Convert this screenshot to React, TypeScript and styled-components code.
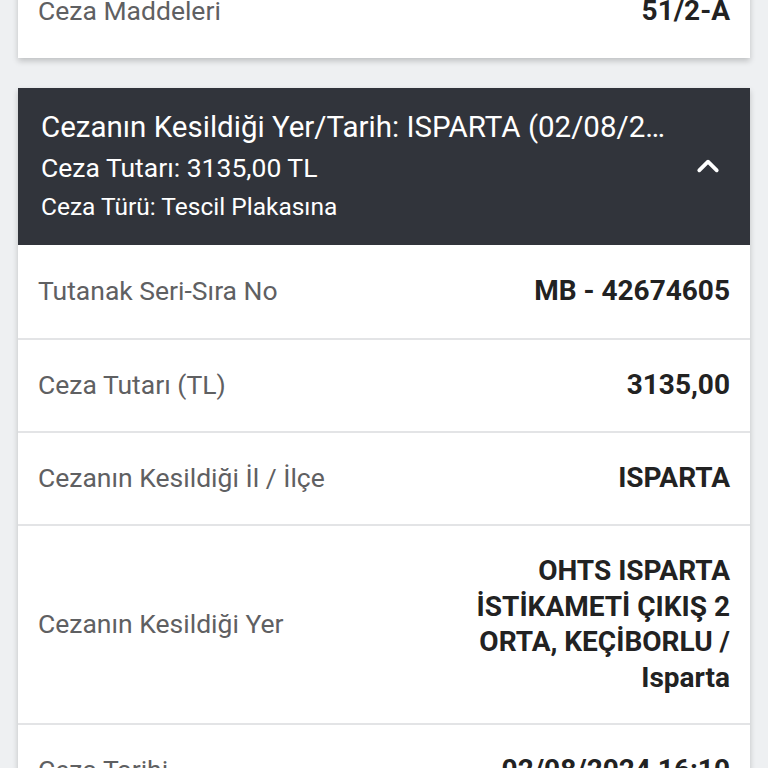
import React from "react";
import styled, { createGlobalStyle } from "styled-components";

const GlobalStyle = createGlobalStyle`
  html, body {
    margin: 0;
    padding: 0;
    background: #eef0f2;
    font-family: Roboto, "Liberation Sans", sans-serif;
  }
`;

const rows = [
  { label: "Tutanak Seri-Sıra No", value: "MB - 42674605" },
  { label: "Ceza Tutarı (TL)", value: "3135,00" },
  { label: "Cezanın Kesildiği İl / İlçe", value: "ISPARTA" },
  {
    label: "Cezanın Kesildiği Yer",
    value: "OHTS ISPARTA İSTİKAMETİ ÇIKIŞ 2 ORTA, KEÇİBORLU / Isparta",
  },
  { label: "Ceza Tarihi", value: "02/08/2024 16:10" },
];

export default function App() {
  return (
    <>
      <GlobalStyle />
      <Page>
        <Card>
          <Row>
            <Label>Ceza Maddeleri</Label>
            <Value>51/2-A</Value>
          </Row>
        </Card>
        <Card>
          <Header>
            <HeaderText>
              <Title>Cezanın Kesildiği Yer/Tarih: ISPARTA (02/08/2024 16:10)</Title>
              <SubTitle>Ceza Tutarı: 3135,00 TL</SubTitle>
              <Small>Ceza Türü: Tescil Plakasına</Small>
            </HeaderText>
            <Chevron viewBox="0 0 24 24">
              <path d="M5 15.5l7-7 7 7" fill="none" stroke="#fff" strokeWidth="3" strokeLinecap="round" strokeLinejoin="round" />
            </Chevron>
          </Header>
          <Body>
            {rows.map((r) => (
              <Row key={r.label}>
                <Label>{r.label}</Label>
                <Value>{r.value}</Value>
              </Row>
            ))}
          </Body>
        </Card>
      </Page>
    </>
  );
}

const Page = styled.div`
  display: flex;
  flex-direction: column;
  gap: 30px;
  padding: 0 18px;
  margin-top: -35px;
`;

const Card = styled.div`
  background: #fff;
  box-shadow: 0 3px 6px rgba(0, 0, 0, 0.2);
  display: flex;
  flex-direction: column;
`;

const Header = styled.div`
  background: #31343b;
  color: #fff;
  display: flex;
  align-items: center;
  padding: 19px 27px 20px 23px;
  gap: 16px;
`;

const HeaderText = styled.div`
  flex: 1;
  min-width: 0;
  display: flex;
  flex-direction: column;
`;

const Title = styled.div`
  font-size: 29.5px;
  line-height: 40px;
  white-space: nowrap;
  overflow: hidden;
  text-overflow: ellipsis;
`;

const SubTitle = styled.div`
  font-size: 26.5px;
  line-height: 42px;
`;

const Small = styled.div`
  font-size: 24.5px;
  line-height: 36px;
`;

const Chevron = styled.svg`
  width: 30px;
  height: 30px;
  flex-shrink: 0;
`;

const Body = styled.div`
  display: flex;
  flex-direction: column;
  & > * + * {
    border-top: 2px solid #e3e4e6;
  }
`;

const Row = styled.div`
  display: flex;
  align-items: center;
  justify-content: space-between;
  gap: 20px;
  min-height: 93px;
  padding: 27px 20px 28px;
  box-sizing: border-box;
`;

const Label = styled.div`
  color: #5f6062;
  font-size: 26.5px;
  line-height: 36px;
`;

const Value = styled.div`
  color: #222;
  font-size: 28px;
  font-weight: 700;
  text-align: right;
  max-width: 290px;
  line-height: 35.5px;
`;
